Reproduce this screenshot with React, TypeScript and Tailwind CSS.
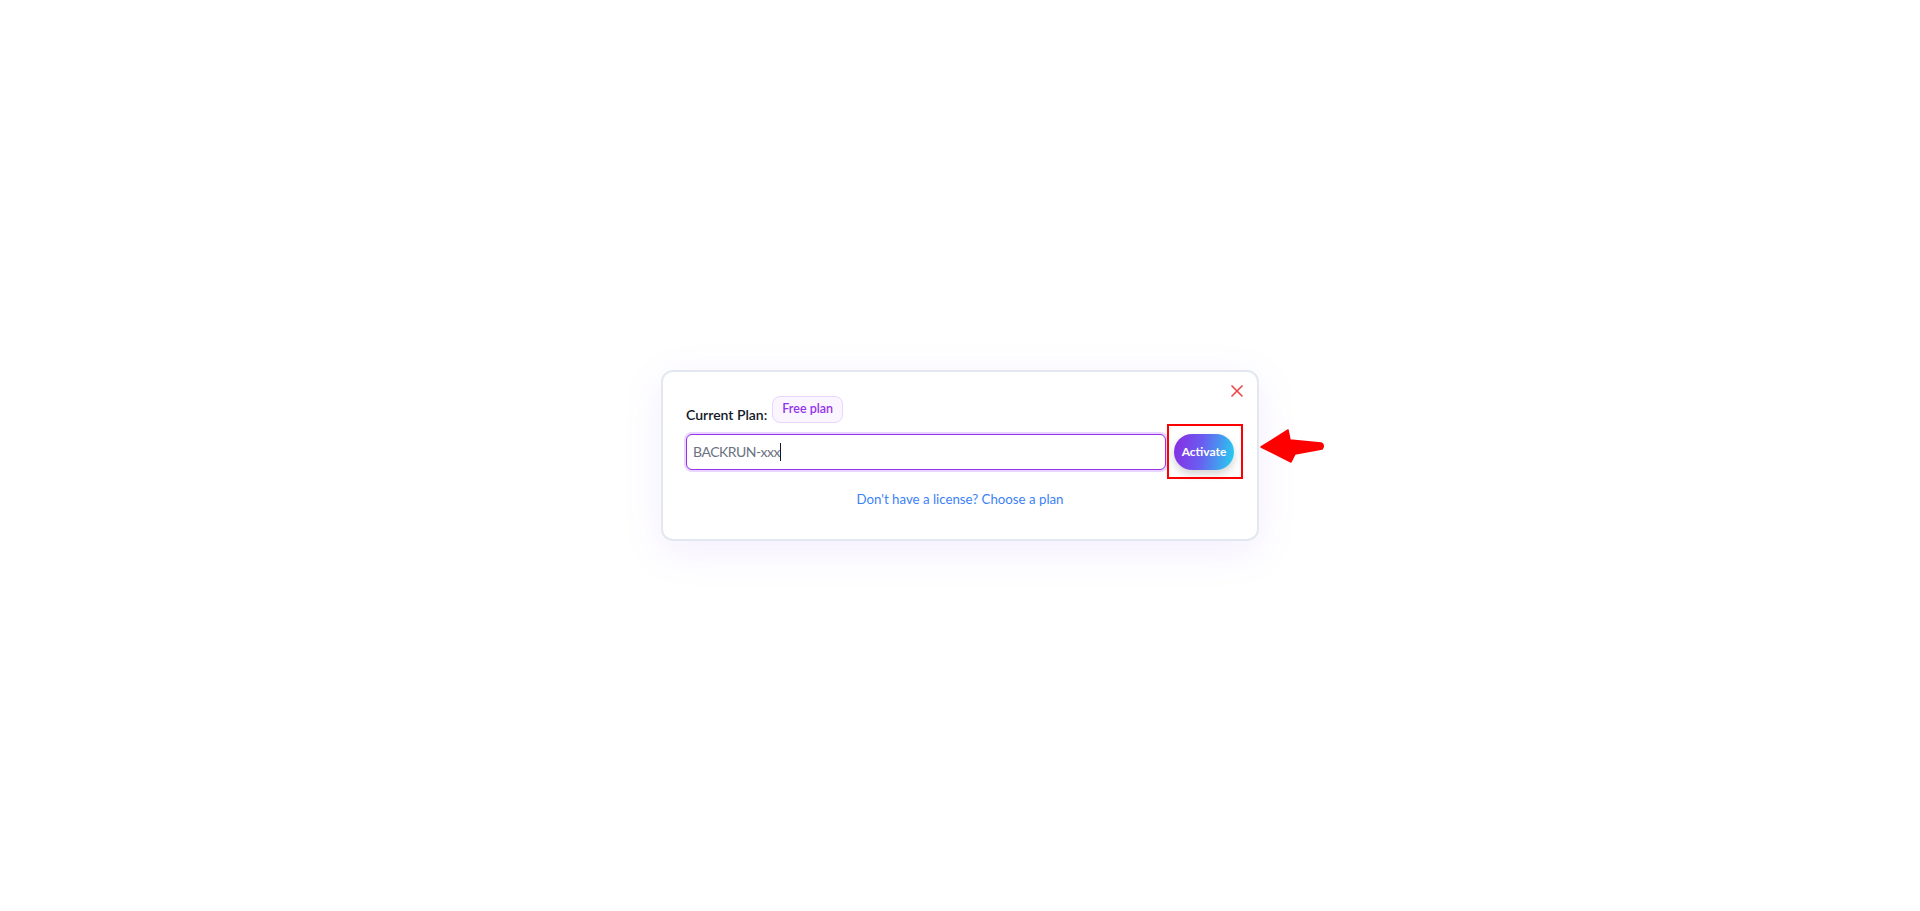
import React from "react";
import { X } from "lucide-react";

export default function App() {
  return (
    <div
      className="w-full h-[911px] bg-white flex items-center justify-center"
      style={{ fontFamily: 'Lato, "Open Sans", sans-serif' }}
    >
      <div className="relative w-[598px] rounded-xl border-2 border-[#e3e8f0] bg-white pl-[23px] pr-[23px] pt-[24px] pb-[29px] shadow-[0_10px_40px_rgba(139,92,246,0.10)]">
        <button className="absolute top-[9px] right-[10px] text-[#ef4444]" aria-label="Close">
          <X size={20} strokeWidth={2} />
        </button>

        <div className="flex items-end gap-[5px]">
          <span className="text-[14px] leading-4 font-semibold text-[#111827]">Current Plan:</span>
          <span className="h-[27px] flex items-center rounded-lg border border-[#e9d5ff] bg-[#faf5ff] px-[9px] text-[12.5px] font-semibold text-[#9333ea]">
            Free plan
          </span>
        </div>

        <div className="mt-[11px] flex items-center gap-2">
          <div className="flex-1 h-9 flex items-center rounded-md border border-[#9333ea] ring-2 ring-[#e9d5ff] bg-white px-[6px]">
            <span className="text-[14px] tracking-[-0.5px] text-[#6b7280] leading-5">BACKRUN-xxx</span>
            <span className="inline-block w-px h-[18px] bg-[#111827]" />
          </div>
          <div className="relative">
            <button className="w-[60px] h-9 rounded-full bg-[linear-gradient(100deg,#8a2be2_0%,#6a5cf0_45%,#22d3ee_100%)] text-white text-[12px] font-bold shadow-[0_4px_8px_rgba(0,0,0,0.18)]">
              Activate
            </button>
            <div className="pointer-events-none absolute left-[-7px] right-[-9px] top-[-10px] bottom-[-9px] border-2 border-[#ff0000]" />
            <svg
              className="pointer-events-none absolute left-[calc(100%+21px)] top-[-10px]"
              width="75"
              height="45"
              viewBox="0 0 75 45"
            >
              <path
                d="M6 23 L33 6 L35 16 L66 19 Q70 21 67 25 L40 30 L36 38 Z"
                fill="#ff0000"
                stroke="#ff0000"
                strokeWidth="1.5"
                strokeLinejoin="round"
              />
            </svg>
          </div>
        </div>

        <div className="mt-4 text-center">
          <a className="text-[13.25px] leading-5 text-[#3b82f6] cursor-pointer">Don't have a license? Choose a plan</a>
        </div>
      </div>
    </div>
  );
}
